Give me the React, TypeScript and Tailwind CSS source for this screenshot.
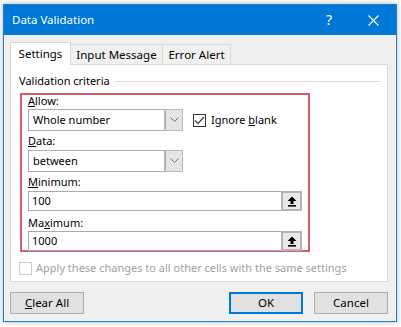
import React from "react";

const font = { fontFamily: '"Noto Sans", "Open Sans", sans-serif' };

function Chevron() {
  return (
    <svg width="9" height="6" viewBox="0 0 9 6">
      <path d="M0.5 0.5 L4.5 4.5 L8.5 0.5" fill="none" stroke="#707070" strokeWidth="1" />
    </svg>
  );
}

function Combo({ value }: { value: string }) {
  return (
    <div className="flex h-[22px] w-[155px] border border-[#acacac] bg-white">
      <div className="flex-1 pl-[4px] text-[11px] leading-[20px] text-black">{value}</div>
      <div className="flex w-[17px] items-center justify-center border-l border-[#acacac] bg-[#e5e5e5] outline outline-1 outline-[#b9b9b9]">
        <Chevron />
      </div>
    </div>
  );
}

function UpArrow() {
  return (
    <svg width="10" height="11" viewBox="0 0 10 11">
      <path d="M5 0.5 L9.5 5 L6.5 5 L6.5 8 L3.5 8 L3.5 5 L0.5 5 Z" fill="#000" />
      <rect x="1" y="9" width="8" height="1.6" fill="#000" />
    </svg>
  );
}

function RefInput({ value }: { value: string }) {
  return (
    <div className="flex h-[20px] w-[274px] border border-[#acacac] bg-white">
      <div className="flex-1 pl-[3px] text-[11px] leading-[18px] text-black">{value}</div>
      <div className="flex w-[21px] items-center justify-center border-2 border-[#b4b4b4] bg-[#e8e8e8] -m-px">
        <UpArrow />
      </div>
    </div>
  );
}

function Check({ checked, disabled }: { checked?: boolean; disabled?: boolean }) {
  return (
    <div
      className={`flex h-[13px] w-[13px] items-center justify-center border ${
        disabled ? "border-[#cccccc]" : "border-[#333333]"
      } bg-white`}
    >
      {checked && (
        <svg width="11" height="9" viewBox="0 0 11 9">
          <path d="M1 4.5 L4 7.5 L10 1" fill="none" stroke="#333" strokeWidth="1.2" />
        </svg>
      )}
    </div>
  );
}

function Btn({ children, def }: { children: React.ReactNode; def?: boolean }) {
  return (
    <div
      className={`flex h-[22px] w-[74px] items-center justify-center bg-[#e1e1e1] text-[11.5px] text-black ${
        def ? "border-2 border-[#0078d7]" : "border border-[#adadad]"
      }`}
    >
      {children}
    </div>
  );
}

export default function App() {
  return (
    <div className="h-[327px] w-[401px] overflow-hidden bg-white pl-[3px] pt-[4px]" style={font}>
      <div className="flex h-[318px] w-[394px] flex-col border border-[#1a7fd6] bg-[#f0f0f0] shadow-[0_0_6px_rgba(0,0,0,0.3)]">
        {/* Title bar */}
        <div className="flex h-[30px] items-center bg-[#0078d7] pl-[8px] text-white">
          <div className="flex-1 text-[11.5px] leading-[30px]">Data Validation</div>
          <div className="mr-[36px] text-[14px] leading-none">?</div>
          <div className="mr-[17px]">
            <svg width="11" height="11" viewBox="0 0 11 11">
              <path d="M0.5 0.5 L10.5 10.5 M10.5 0.5 L0.5 10.5" stroke="#fff" strokeWidth="1.1" />
            </svg>
          </div>
        </div>

        {/* Body */}
        <div className="flex flex-1 flex-col pl-[6px] pr-[8px] pt-[7px]">
          {/* Tabs */}
          <div className="relative z-10 flex h-[22px] items-end text-[11.5px] text-black">
            <div className="-mb-px flex h-[23px] w-[61px] items-center justify-center border border-b-0 border-[#d9d9d9] bg-white pb-[1px]">
              Settings
            </div>
            <div className="flex h-[20px] w-[92px] items-center justify-center border border-b-0 border-l-0 border-[#d9d9d9] bg-[#f0f0f0]">
              Input Message
            </div>
            <div className="flex h-[20px] w-[68px] items-center justify-center border border-b-0 border-l-0 border-[#d9d9d9] bg-[#f0f0f0]">
              Error Alert
            </div>
          </div>
          {/* Panel */}
          <div className="flex h-[218px] w-[378px] flex-col border border-[#d9d9d9] bg-white pl-[8px] pt-[8px] text-[11px] text-black">
            <div className="flex h-[16px] items-center pr-[6px]">
              <span className="leading-[16px]">Validation criteria</span>
              <div className="ml-[5px] h-px flex-1 bg-[#dcdcdc]" />
            </div>
            <div className="ml-[1px] mt-[4px] h-[159px] w-[290px] border-2 border-[#d75a68] pl-[6px]">
              <div className="h-[12px] leading-[12px]">
                <span className="underline">A</span>llow:
              </div>
              <div className="mt-[2px] flex items-center">
                <Combo value="Whole number" />
                <div className="ml-[10px] flex items-center">
                  <Check checked />
                  <span className="ml-[5px]">
                    Ignore <span className="underline">b</span>lank
                  </span>
                </div>
              </div>
              <div className="mt-[3px] h-[14px] leading-[14px]">
                <span className="underline">D</span>ata:
              </div>
              <div className="mt-[2px]">
                <Combo value="between" />
              </div>
              <div className="mt-[3px] h-[14px] leading-[14px]">
                <span className="underline">M</span>inimum:
              </div>
              <div className="mt-[2px]">
                <RefInput value="100" />
              </div>
              <div className="mt-[5px] h-[14px] leading-[14px]">
                Ma<span className="underline">x</span>imum:
              </div>
              <div className="mt-[1px]">
                <RefInput value="1000" />
              </div>
            </div>
            <div className="mt-[8px] flex items-center">
              <Check disabled />
              <span className="ml-[4px] text-[#a0a0a0]">
                Apply these changes to all other cells with the same settings
              </span>
            </div>
          </div>
          {/* Buttons */}
          <div className="mt-[10px] flex">
            <Btn>
              <span>
                <span className="underline">C</span>lear All
              </span>
            </Btn>
            <div className="flex-1" />
            <Btn def>OK</Btn>
            <div className="w-[11px]" />
            <Btn>Cancel</Btn>
          </div>
        </div>
      </div>
    </div>
  );
}
